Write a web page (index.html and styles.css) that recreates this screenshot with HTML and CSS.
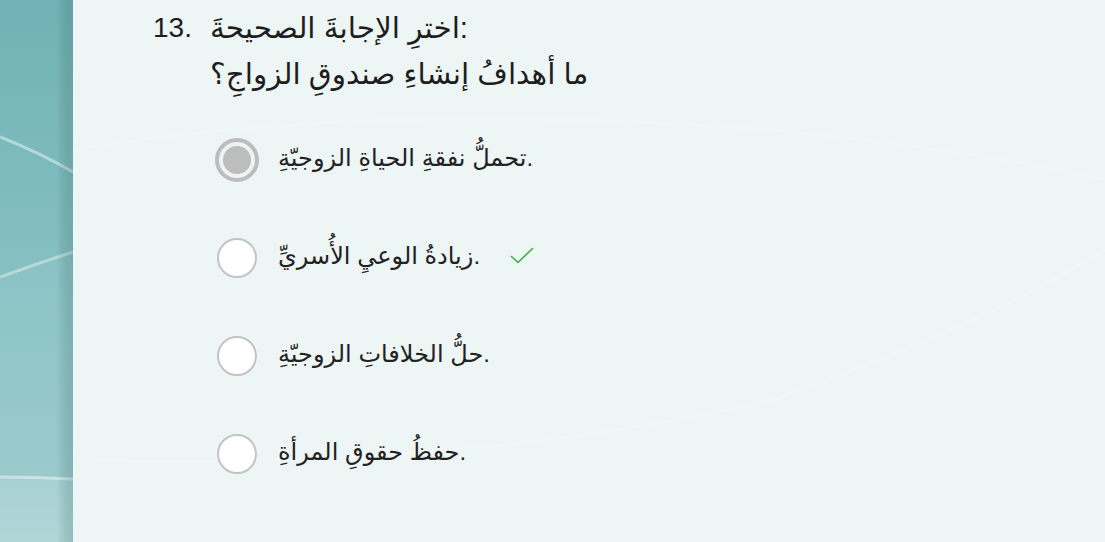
FILE: index.html
```html
<!DOCTYPE html>
<html lang="ar">
<head>
<meta charset="utf-8">
<title>Quiz</title>
<link rel="stylesheet" href="styles.css">
</head>
<body>
<div class="page">
  <aside class="sidebar">
    <svg class="sidebar-art" width="73" height="542" viewBox="0 0 73 542" preserveAspectRatio="none">
      <defs>
        <linearGradient id="edge" x1="0" y1="0" x2="1" y2="0">
          <stop offset="0" stop-color="#000" stop-opacity="0"/>
          <stop offset="0.78" stop-color="#000" stop-opacity="0"/>
          <stop offset="1" stop-color="#2a6f72" stop-opacity="0.22"/>
        </linearGradient>
      </defs>
      <path d="M0 478 L73 478 L73 542 L0 542 Z" fill="#ffffff" fill-opacity="0.12"/>
      <path d="M0 277 Q36 264 73 252 L73 542 L0 542 Z" fill="#ffffff" fill-opacity="0.05"/>
      <path d="M0 137 Q38 152 73 172" fill="none" stroke="#ffffff" stroke-opacity="0.45" stroke-width="3"/>
      <path d="M0 277 Q36 264 73 252" fill="none" stroke="#ffffff" stroke-opacity="0.4" stroke-width="3"/>
      <path d="M0 477 Q36 477 73 479" fill="none" stroke="#ffffff" stroke-opacity="0.45" stroke-width="3"/>
      <rect x="0" y="0" width="73" height="542" fill="url(#edge)"/>
    </svg>
  </aside>
  <main class="main">
    <svg class="main-art" width="1032" height="542" viewBox="0 0 1032 542" preserveAspectRatio="none">
      <path d="M0 150 Q300 100 700 130 Q900 150 1032 180" fill="none" stroke="#ffffff" stroke-opacity="0.22" stroke-width="3"/>
      <path d="M0 460 Q400 470 700 400 Q900 330 1032 250" fill="none" stroke="#ffffff" stroke-opacity="0.18" stroke-width="3"/>
      <path d="M300 450 Q700 480 1032 410" fill="none" stroke="#ffffff" stroke-opacity="0.15" stroke-width="3"/>
    </svg>
    <section class="question">
      <span class="qnum">13.</span>
      <div class="qtext">
        <div class="qline">اخترِ الإجابةَ الصحيحةَ:</div>
        <div class="qline">ما أهدافُ إنشاءِ صندوقِ الزواجِ؟</div>
      </div>
    </section>
    <ul class="options">
      <li class="option">
        <span class="radio radio-selected"></span>
        <span class="opt-text">تحملُّ نفقةِ الحياةِ الزوجيّةِ.</span>
      </li>
      <li class="option">
        <span class="radio"></span>
        <span class="opt-text">زيادةُ الوعيِ الأُسريِّ.</span>
        <svg class="check" width="24" height="18" viewBox="0 0 24 18">
          <polyline points="1.5,9.5 8,15.5 22.5,1.5" fill="none" stroke="#35b335" stroke-width="1.6" stroke-linejoin="round" stroke-linecap="round"/>
        </svg>
      </li>
      <li class="option">
        <span class="radio"></span>
        <span class="opt-text">حلُّ الخلافاتِ الزوجيّةِ.</span>
      </li>
      <li class="option">
        <span class="radio"></span>
        <span class="opt-text">حفظُ حقوقِ المرأةِ.</span>
      </li>
    </ul>
  </main>
</div>
</body>
</html>
```

FILE: styles.css
```css
* {
  box-sizing: border-box;
}

html, body {
  margin: 0;
  padding: 0;
}

body {
  width: 1105px;
  height: 542px;
  overflow: hidden;
  font-family: "Liberation Sans", "DejaVu Sans", sans-serif;
  color: #1f1f1f;
  direction: ltr;
}

.page {
  display: flex;
  width: 1105px;
  height: 542px;
}

.sidebar {
  flex: 0 0 73px;
  height: 542px;
  background: linear-gradient(180deg, #70b2b5 0%, #7cbabd 30%, #8ac2c4 60%, #96c8ca 88%, #a2cfd1 100%);
}

.sidebar-art {
  display: block;
}

.main {
  position: relative;
  flex: 1 1 auto;
  height: 542px;
  background: #eef5f5;
  padding: 5px 0 0 80px;
}

.main-art {
  position: absolute;
  left: 0;
  top: 0;
  z-index: 0;
  pointer-events: none;
}

.question {
  position: relative;
  z-index: 1;
  display: flex;
  font-size: 28px;
  line-height: 46px;
  color: #1e1e1e;
}

.qnum {
  flex: 0 0 57px;
}

.qtext {
  display: flex;
  flex-direction: column;
  font-size: 29.5px;
}

.options {
  position: relative;
  z-index: 1;
  list-style: none;
  margin: 14px 0 0;
  padding: 0 0 0 64px;
}

.option {
  display: flex;
  align-items: center;
  height: 98px;
}

.radio {
  flex: 0 0 40px;
  width: 40px;
  height: 40px;
  border-radius: 50%;
  border: 2px solid #c3c3c3;
  background: #ffffff;
}

.radio-selected {
  flex: 0 0 44px;
  width: 44px;
  height: 44px;
  margin: 0 -2px 0 -2px;
  border: 4px solid #bdbdbd;
  background: radial-gradient(circle, #bdbdbd 0, #bdbdbd 13.5px, #eef3f3 14.5px);
}

.opt-text {
  margin-left: 21px;
  font-size: 24px;
  line-height: 32px;
  color: #222222;
  padding-bottom: 4px;
}

.check {
  margin-left: 30px;
  margin-top: -4px;
  display: block;
}
```
